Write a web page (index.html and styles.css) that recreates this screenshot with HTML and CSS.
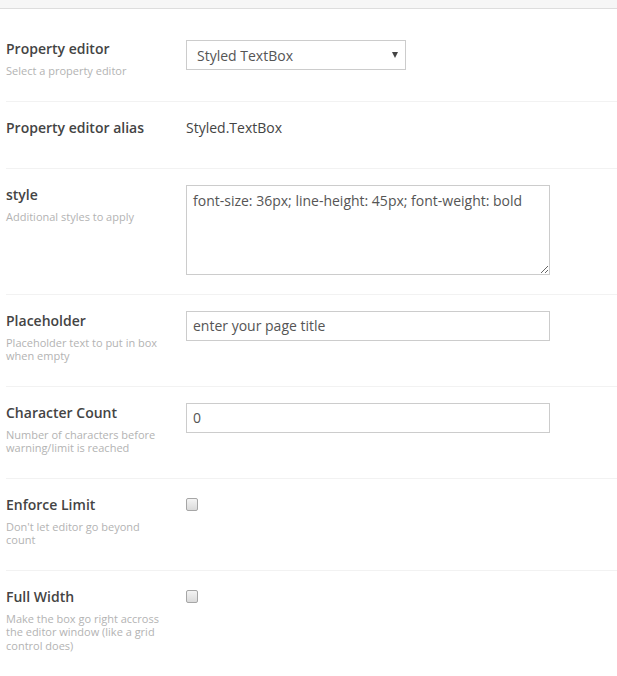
FILE: index.html
```html
<!DOCTYPE html>
<html>
<head>
<meta charset="utf-8">
<link rel="stylesheet" href="styles.css">
</head>
<body>
<div class="topbar"></div>
<div class="form">
  <div class="row">
    <div class="label-col">
      <div class="label">Property editor</div>
      <div class="desc">Select a property editor</div>
    </div>
    <div class="control">
      <div class="select"><span>Styled TextBox</span><span class="arrow"></span></div>
    </div>
  </div>
  <div class="row row-alias">
    <div class="label-col">
      <div class="label">Property editor alias</div>
    </div>
    <div class="control">
      <div class="value">Styled.TextBox</div>
    </div>
  </div>
  <div class="row row-area">
    <div class="label-col">
      <div class="label">style</div>
      <div class="desc">Additional styles to apply</div>
    </div>
    <div class="control">
      <textarea class="textarea">font-size: 36px; line-height: 45px; font-weight: bold</textarea>
    </div>
  </div>
  <div class="row">
    <div class="label-col">
      <div class="label">Placeholder</div>
      <div class="desc">Placeholder text to put in box when empty</div>
    </div>
    <div class="control">
      <input class="input" type="text" value="enter your page title">
    </div>
  </div>
  <div class="row">
    <div class="label-col">
      <div class="label">Character Count</div>
      <div class="desc">Number of characters before warning/limit is reached</div>
    </div>
    <div class="control">
      <input class="input" type="text" value="0">
    </div>
  </div>
  <div class="row">
    <div class="label-col">
      <div class="label">Enforce Limit</div>
      <div class="desc">Don't let editor go beyond count</div>
    </div>
    <div class="control">
      <input class="check" type="checkbox">
    </div>
  </div>
  <div class="row row-last">
    <div class="label-col">
      <div class="label">Full Width</div>
      <div class="desc">Make the box go right accross the editor window (like a grid control does)</div>
    </div>
    <div class="control">
      <input class="check" type="checkbox">
    </div>
  </div>
</div>
</body>
</html>
```
FILE: styles.css
```css
html, body {
  margin: 0;
  padding: 0;
  background: #fff;
  font-family: "Open Sans", "Liberation Sans", sans-serif;
}
.topbar {
  height: 8px;
  background: #f6f6f6;
  border-bottom: 1px solid #dddddd;
}
.form {
  padding: 14px 0 0 6px;
}
.row {
  display: flex;
  padding: 16px 0 23px 0;
  border-bottom: 1px solid #f2f2f2;
}
.row-alias {
  padding-bottom: 30px;
}
.row-area {
  padding-bottom: 19px;
}
.row-last {
  border-bottom: none;
}
.label-col {
  width: 180px;
  flex: none;
}
.label {
  font-size: 14px;
  line-height: 20px;
  font-weight: 600;
  color: #444444;
}
.desc {
  margin-top: 5px;
  width: 162px;
  font-size: 11px;
  line-height: 13.5px;
  color: #b3b3b3;
}
.control {
  flex: 1;
}
.select {
  box-sizing: border-box;
  width: 220px;
  height: 30px;
  margin-top: 1px;
  border: 1px solid #cccccc;
  display: flex;
  align-items: center;
  justify-content: space-between;
  padding: 0 7px 0 10px;
  font-size: 14px;
  color: #555;
}
.arrow {
  width: 0;
  height: 0;
  border-left: 3px solid transparent;
  border-right: 3px solid transparent;
  border-top: 6px solid #444;
}
.value {
  font-size: 14px;
  line-height: 20px;
  color: #444444;
}
.textarea {
  display: block;
  box-sizing: border-box;
  width: 364px;
  height: 90px;
  margin: 0;
  border: 1px solid #cccccc;
  padding: 5px 6px;
  font-family: "Open Sans", "Liberation Sans", sans-serif;
  font-size: 14px;
  line-height: 20px;
  color: #555;
  resize: both;
  outline: none;
}
.input {
  display: block;
  box-sizing: border-box;
  width: 364px;
  height: 30px;
  margin: 0;
  border: 1px solid #cccccc;
  padding: 0 6px;
  font-family: "Open Sans", "Liberation Sans", sans-serif;
  font-size: 14px;
  color: #555;
  outline: none;
}
.check {
  -webkit-appearance: none;
  appearance: none;
  display: block;
  width: 12px;
  height: 13px;
  margin: 3px 0 0 0;
  border: 1px solid #a6a6a6;
  border-radius: 2px;
  background: linear-gradient(#f4f4f4, #dadada);
}
```
